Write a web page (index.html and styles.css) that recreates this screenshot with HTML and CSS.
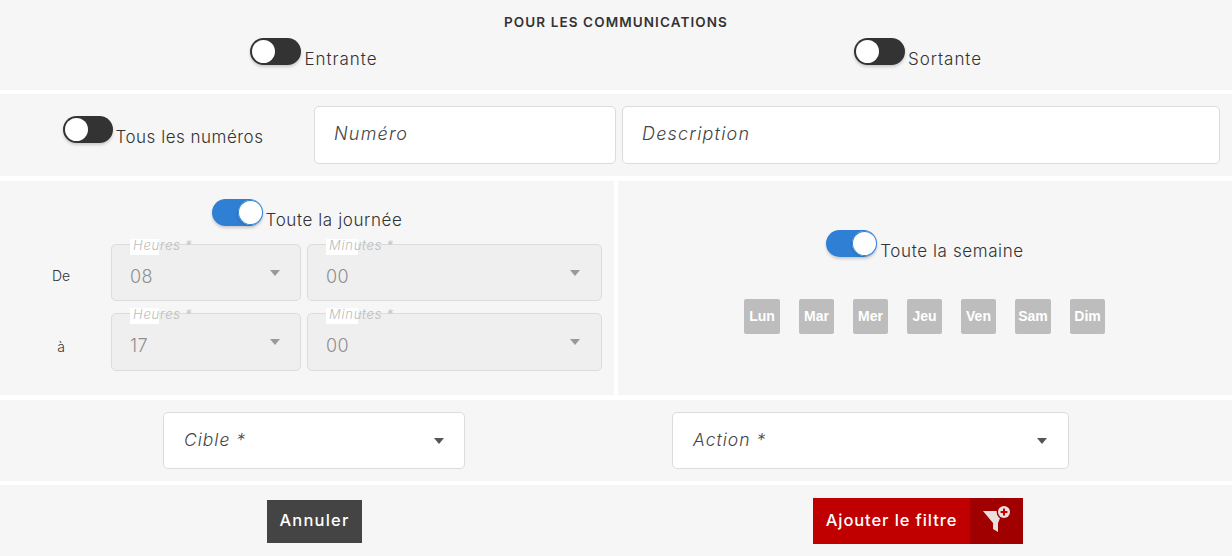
FILE: index.html
```html
<!DOCTYPE html>
<html lang="fr">
<head>
<meta charset="utf-8">
<title>Filtre</title>
<link rel="stylesheet" href="styles.css">
</head>
<body>
<section class="band band-comm">
  <h2 class="title">POUR LES COMMUNICATIONS</h2>
  <div class="comm-cols">
    <div class="toggle-line"><span class="switch"><span class="knob"></span></span><span class="toggle-text">Entrante</span></div>
    <div class="toggle-line"><span class="switch"><span class="knob"></span></span><span class="toggle-text">Sortante</span></div>
  </div>
</section>
<section class="band band-num">
  <div class="num-toggle"><div class="toggle-line"><span class="switch switch-num"><span class="knob"></span></span><span class="toggle-text">Tous les numéros</span></div></div>
  <div class="field field-num">Numéro</div>
  <div class="field field-desc">Description</div>
</section>
<section class="band-split">
  <div class="panel panel-time">
    <div class="toggle-line toggle-day"><span class="switch on"><span class="knob"></span></span><span class="toggle-text">Toute la journée</span></div>
    <div class="time-row">
      <span class="time-label">De</span>
      <div class="select disabled sel-h"><span class="float"><span class="patch patch-h"></span><span class="float-text">Heures *</span></span><span class="value">08</span><span class="caret"></span></div>
      <div class="select disabled sel-m"><span class="float"><span class="patch patch-m"></span><span class="float-text">Minutes *</span></span><span class="value">00</span><span class="caret"></span></div>
    </div>
    <div class="time-row row-to">
      <span class="time-label">à</span>
      <div class="select disabled sel-h"><span class="float"><span class="patch patch-h"></span><span class="float-text">Heures *</span></span><span class="value">17</span><span class="caret"></span></div>
      <div class="select disabled sel-m"><span class="float"><span class="patch patch-m"></span><span class="float-text">Minutes *</span></span><span class="value">00</span><span class="caret"></span></div>
    </div>
  </div>
  <div class="panel panel-week">
    <div class="toggle-line toggle-week"><span class="switch on"><span class="knob"></span></span><span class="toggle-text">Toute la semaine</span></div>
    <div class="days">
      <span class="day wide">Lun</span><span class="day">Mar</span><span class="day">Mer</span><span class="day">Jeu</span><span class="day">Ven</span><span class="day wide">Sam</span><span class="day">Dim</span>
    </div>
  </div>
</section>
<section class="band band-target">
  <div class="select sel-target"><span class="placeholder">Cible *</span><span class="caret"></span></div>
  <div class="select sel-action"><span class="placeholder">Action *</span><span class="caret"></span></div>
</section>
<section class="band-actions">
  <button class="btn-cancel" type="button">Annuler</button>
  <button class="btn-add" type="button"><span class="btn-add-text">Ajouter le filtre</span><span class="btn-add-icon">
    <svg width="32" height="32" viewBox="0 0 32 32" aria-hidden="true">
      <path d="M3 8H23L18 20V29L13 26V20Z" fill="#eadede"/>
      <circle cx="24" cy="9" r="7.4" fill="#a00000"/>
      <circle cx="24" cy="9" r="6" fill="#eadede"/>
      <path d="M20.6 9H27.4M24 5.6V12.4" stroke="#c00000" stroke-width="2"/>
    </svg></span></button>
</section>
</body>
</html>
```
FILE: styles.css
```css
* { box-sizing: border-box; }
html, body { margin: 0; padding: 0; }
body {
  background: #fff;
  width: 1232px;
  height: 556px;
  overflow: hidden;
  font-family: "Inter", "Liberation Sans", sans-serif;
  color: #3c3c3c;
}
.band, .panel, .band-actions { background: #f6f6f6; }

.band-comm { height: 90px; padding: 14px 12px 0; margin-bottom: 4px; }
.title {
  margin: 0;
  text-align: center;
  font-size: 13.5px;
  line-height: 16px;
  font-weight: 600;
  color: #333;
  letter-spacing: 1.1px;
}
.comm-cols { display: grid; grid-template-columns: 1fr 1fr; margin-top: 8px; }

.toggle-line { display: flex; justify-content: center; align-items: flex-start; }
.toggle-text { font-size: 17px; line-height: 20px; margin: 11px 0 0 3px; font-weight: 300; color: #333; letter-spacing: 0.6px; }
.comm-cols .toggle-text { letter-spacing: 0.95px; }
.band-num .toggle-text { letter-spacing: 0.5px; }
.switch {
  position: relative;
  width: 51px;
  height: 27px;
  border-radius: 14px;
  background: #333;
  box-shadow: 0 2px 3px rgba(0,0,0,.18);
  flex: none;
}
.switch-num { width: 50px; }
.knob {
  position: absolute;
  left: 2px;
  top: 2px;
  width: 23px;
  height: 23px;
  border-radius: 50%;
  background: #fff;
}
.switch.on { background: #2f80d4; }
.switch.on .knob { left: auto; right: 0; top: 1px; width: 25px; height: 25px; box-shadow: 0 0 0 1px #2f80d4 inset, -1px 1px 2px rgba(0,0,0,.15); background: #fff; }

.band-num { height: 82px; margin-bottom: 5px; padding: 12px 12px 0; display: flex; }
.num-toggle { width: 302px; padding-top: 10px; flex: none; }
.field {
  height: 58px;
  background: #fff;
  border: 1px solid #dcdcdc;
  border-radius: 5px;
  padding: 0 19px;
  font-size: 18px;
  line-height: 54px;
  font-style: italic;
  font-weight: 300;
  color: #444;
  letter-spacing: 1.2px;
}
.field-num { width: 302px; }
.field-desc { width: 598px; margin-left: 6px; }

.band-split { display: flex; gap: 4px; height: 214px; margin-bottom: 5px; }
.panel { width: 614px; }
.panel-time { padding: 18px 12px 0 0; }
.toggle-day { height: 27px; margin-bottom: 18px; padding-left: 12px; }
.time-row { display: flex; align-items: flex-start; height: 58px; }
.row-to { margin-top: 11px; }
.time-label { width: 111px; padding: 22px 0 0 11px; text-align: center; font-size: 14px; line-height: 20px; font-weight: 300; color: #333; flex: none; }
.row-to .time-label { padding-top: 24px; }

.select {
  position: relative;
  display: flex;
  align-items: center;
  height: 57px;
  background: #fff;
  border: 1px solid #dcdcdc;
  border-radius: 5px;
}
.select.disabled { background: #efefef; }
.row-to .select { height: 58px; }
.sel-h { width: 190px; }
.sel-m { width: 295px; margin-left: 6px; }
.value { margin-left: 18px; font-size: 18px; font-weight: 300; color: #8f8f8f; margin-top: 7px; letter-spacing: 0.4px; }
.caret {
  position: absolute;
  right: 20px;
  top: 25px;
  border-left: 5.5px solid transparent;
  border-right: 5.5px solid transparent;
  border-top: 6px solid #555;
}
.disabled .caret { border-top-color: #999; top: 25px; }
.sel-m .caret { right: 21px; }
.float {
  position: absolute;
  left: 18px;
  top: -6px;
  height: 16px;
  display: block;
  white-space: nowrap;
}
.patch { position: absolute; left: 0; top: 0; height: 16px; background: #fff; }
.patch-h { width: 29px; }
.patch-m { width: 32px; }
.float-text { position: relative; top: -2px; display: block; padding-left: 3px; font-size: 13px; line-height: 16px; font-style: italic; font-weight: 300; color: #bdbdbd; letter-spacing: 0.75px; }

.panel-week { padding-top: 49px; }
.days { display: flex; margin: 38px 0 0 126px; }
.day {
  width: 35px;
  height: 35px;
  margin-right: 19px;
  background: #bdbdbd;
  border-radius: 2px;
  color: #fff;
  font-family: "Liberation Sans", sans-serif;
  font-weight: 700;
  font-size: 14px;
  line-height: 35px;
  text-align: center;
}
.day.wide { width: 36px; }

.band-target { height: 81px; margin-bottom: 4px; padding: 12px 0 0 163px; display: flex; }
.sel-target { width: 302px; }
.sel-action { width: 397px; margin-left: 207px; }
.sel-action .caret { right: 21px; }
.placeholder { margin-left: 20px; font-size: 17.5px; font-style: italic; font-weight: 300; color: #444; margin-top: -3px; letter-spacing: 1px; }
.band-target .select { height: 57px; }

.band-actions { height: 71px; display: flex; align-items: flex-start; padding-left: 267px; }
.btn-cancel {
  width: 95px;
  height: 43px;
  margin-top: 15px;
  background: #444;
  border: 0;
  color: #fff;
  font: 500 16.5px/37px "Inter", "Liberation Sans", sans-serif;
  padding: 0 0 2px;
  letter-spacing: 1.2px;
}
.btn-add {
  display: flex;
  width: 210px;
  height: 46px;
  margin: 13px 0 0 451px;
  background: #c00000;
  border: 0;
  padding: 0;
  color: #fff;
}
.btn-add-text { width: 157px; font: 500 16.5px/44px "Inter", "Liberation Sans", sans-serif; text-align: center; letter-spacing: 0.9px; }
.btn-add-icon { width: 53px; height: 46px; background: #a00000; display: block; padding: 5px 0 0 10px; }
.btn-add-icon svg { display: block; }
```
